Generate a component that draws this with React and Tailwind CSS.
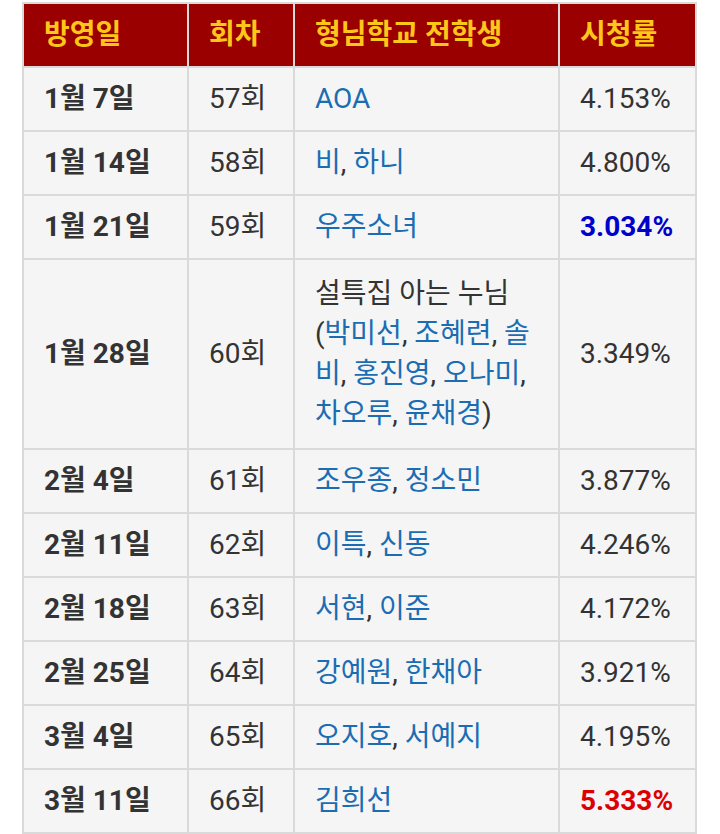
const ROWS = [
  { date: "1월 7일", ep: "57회", guests: [["AOA"]], rate: "4.153%" },
  { date: "1월 14일", ep: "58회", guests: [["비", "하니"]], rate: "4.800%" },
  { date: "1월 21일", ep: "59회", guests: [["우주소녀"]], rate: "3.034%", tone: "low" },
  { date: "1월 28일", ep: "60회", special: true, rate: "3.349%" },
  { date: "2월 4일", ep: "61회", guests: [["조우종", "정소민"]], rate: "3.877%" },
  { date: "2월 11일", ep: "62회", guests: [["이특", "신동"]], rate: "4.246%" },
  { date: "2월 18일", ep: "63회", guests: [["서현", "이준"]], rate: "4.172%" },
  { date: "2월 25일", ep: "64회", guests: [["강예원", "한채아"]], rate: "3.921%" },
  { date: "3월 4일", ep: "65회", guests: [["오지호", "서예지"]], rate: "4.195%" },
  { date: "3월 11일", ep: "66회", guests: [["김희선"]], rate: "5.333%", tone: "high" },
];

const link = "text-[#1b6db3]";
const cell = "border-2 border-[#dadada] bg-[#f5f5f5] pl-[20px] pr-1 align-middle whitespace-nowrap";
const head = "border-2 border-[#dadada] bg-[#9b0000] pl-[20px] text-left font-bold text-[#ffc61a] whitespace-nowrap";

function Guests({ names }) {
  return names.map((n, i) => (
    <span key={n}>
      {i > 0 && ", "}
      <span className={link}>{n}</span>
    </span>
  ));
}

function SpecialGuests() {
  return (
    <div className="leading-[40px]">
      <div>설특집 아는 누님</div>
      <div>(<span className={link}>박미선</span>, <span className={link}>조혜련</span>, <span className={link}>솔</span></div>
      <div><span className={link}>비</span>, <span className={link}>홍진영</span>, <span className={link}>오나미</span>,</div>
      <div><span className={link}>차오루</span>, <span className={link}>윤채경</span>)</div>
    </div>
  );
}

export default function App() {
  return (
    <div className="min-h-[834px] bg-white pt-[2px] pl-[22px] text-[#333] text-[28px]" style={{ fontFamily: 'Roboto, "Noto Sans CJK KR", sans-serif' }}>
      <table className="border-collapse w-[673px] table-fixed">
        <colgroup>
          <col className="w-[165px]" />
          <col className="w-[106px]" />
          <col className="w-[265px]" />
          <col className="w-[137px]" />
        </colgroup>
        <thead>
          <tr className="h-[64px]">
            <th className={head}>방영일</th>
            <th className={head}>회차</th>
            <th className={head}>형님학교 전학생</th>
            <th className={head}>시청률</th>
          </tr>
        </thead>
        <tbody>
          {ROWS.map(r => (
            <tr key={r.ep} className={r.special ? "h-[190px]" : "h-[64px]"}>
              <td className={`${cell} font-bold`}>{r.date}</td>
              <td className={cell}>{r.ep}</td>
              <td className={cell}>
                {r.special ? <SpecialGuests /> : r.guests.map((g, i) => <Guests key={i} names={g} />)}
              </td>
              <td className={`${cell} ${r.tone === "low" ? "font-bold text-[#0000cc]" : r.tone === "high" ? "font-bold text-[#dd0000]" : ""}`}>
                {r.rate}
              </td>
            </tr>
          ))}
        </tbody>
      </table>
    </div>
  );
}
